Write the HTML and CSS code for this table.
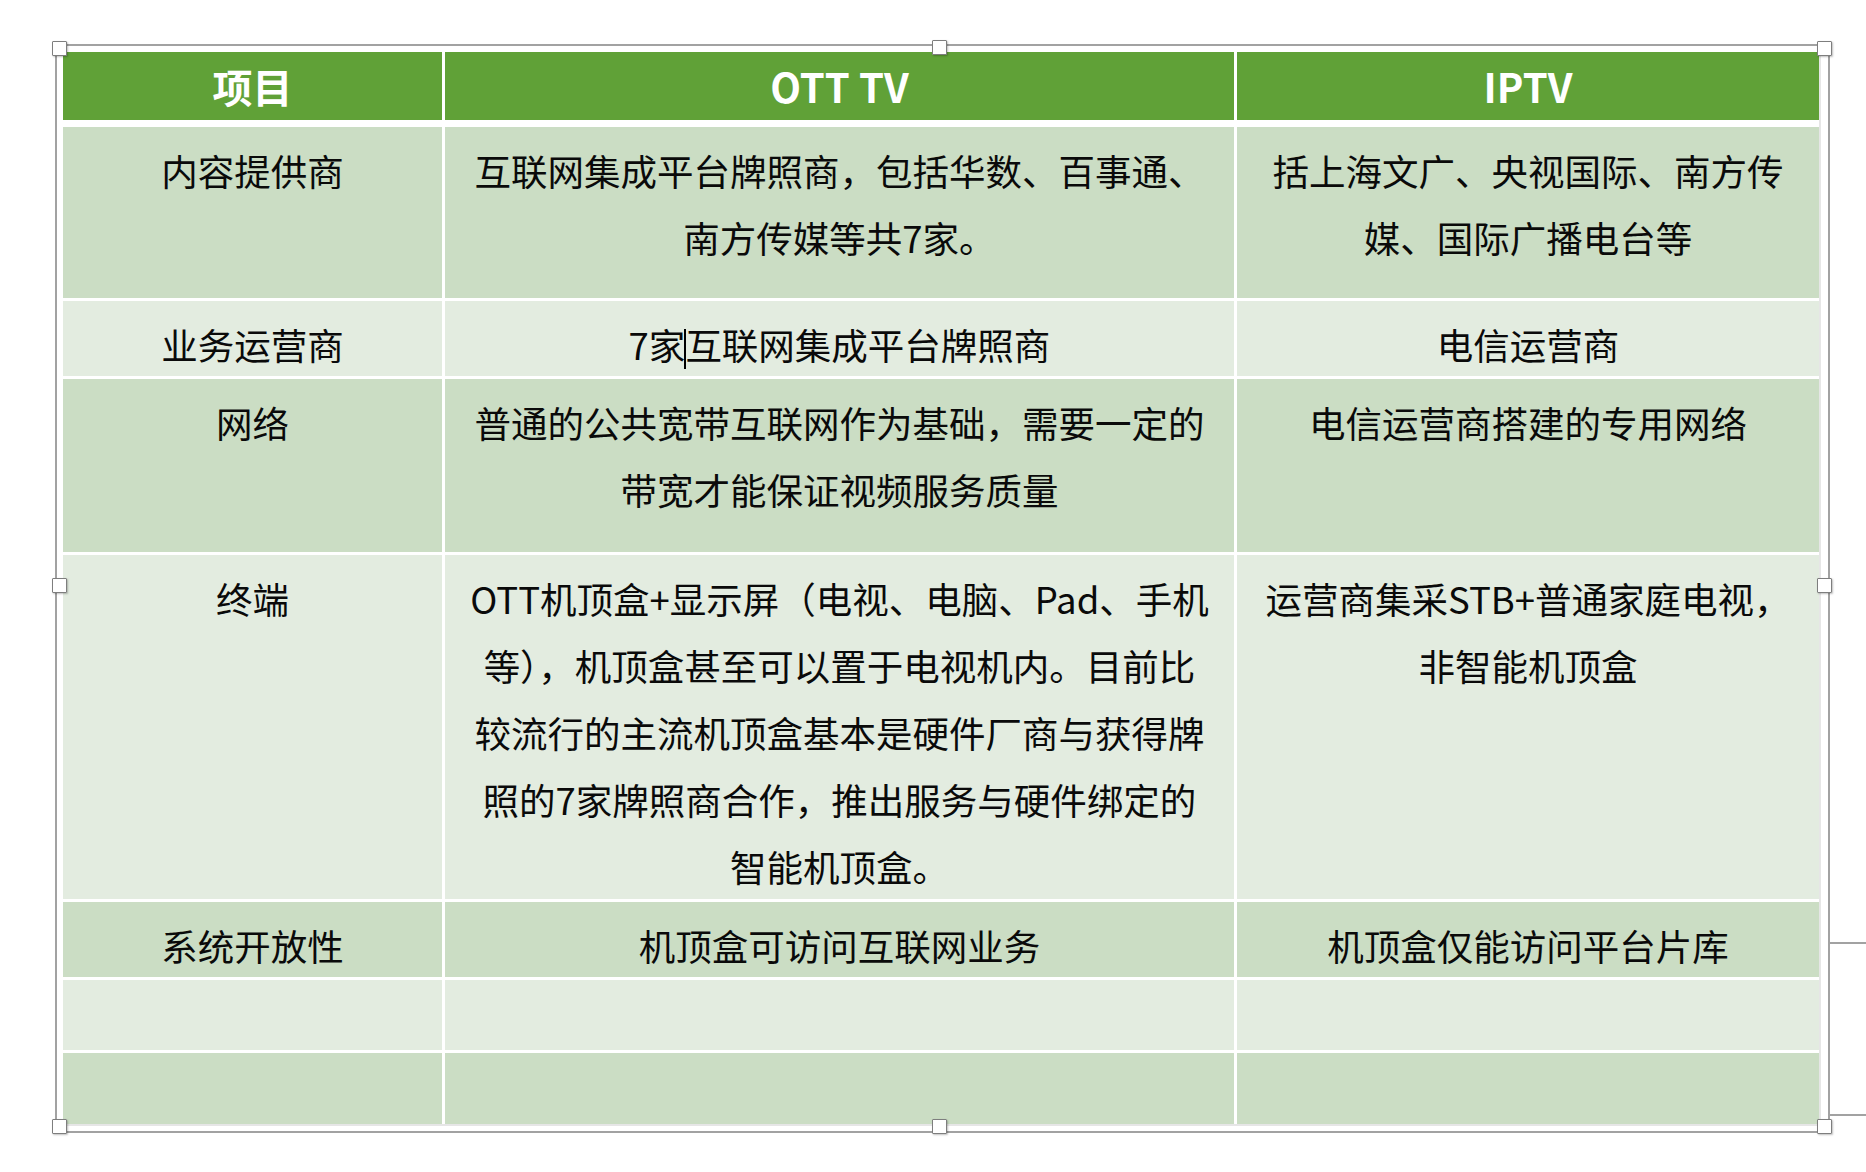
FILE: index.html
```html
<!DOCTYPE html>
<html lang="zh-CN">
<head>
<meta charset="utf-8">
<title>OTT TV 与 IPTV 对比</title>
<link rel="stylesheet" href="styles.css">
</head>
<body>
<div class="frame">
  <div class="grid">
    <div class="row head">
      <div class="cell">项目</div>
      <div class="cell">OTT TV</div>
      <div class="cell">IPTV</div>
    </div>
    <div class="row dark">
      <div class="cell">内容提供商</div>
      <div class="cell">互联网集成平台牌照商，包括华数、百事通、<br>南方传媒等共7家。</div>
      <div class="cell">括上海文广、央视国际、南方传<br>媒、国际广播电台等</div>
    </div>
    <div class="row light">
      <div class="cell">业务运营商</div>
      <div class="cell">7家<span class="caret"></span>互联网集成平台牌照商</div>
      <div class="cell">电信运营商</div>
    </div>
    <div class="row dark">
      <div class="cell">网络</div>
      <div class="cell">普通的公共宽带互联网作为基础，需要一定的<br>带宽才能保证视频服务质量</div>
      <div class="cell">电信运营商搭建的专用网络</div>
    </div>
    <div class="row light">
      <div class="cell">终端</div>
      <div class="cell">OTT机顶盒+显示屏（电视、电脑、Pad、手机<br>等），机顶盒甚至可以置于电视机内。目前比<br>较流行的主流机顶盒基本是硬件厂商与获得牌<br>照的7家牌照商合作，推出服务与硬件绑定的<br>智能机顶盒。</div>
      <div class="cell">运营商集采STB+普通家庭电视，<br>非智能机顶盒</div>
    </div>
    <div class="row dark">
      <div class="cell">系统开放性</div>
      <div class="cell">机顶盒可访问互联网业务</div>
      <div class="cell">机顶盒仅能访问平台片库</div>
    </div>
    <div class="row light">
      <div class="cell"></div>
      <div class="cell"></div>
      <div class="cell"></div>
    </div>
    <div class="row dark">
      <div class="cell"></div>
      <div class="cell"></div>
      <div class="cell"></div>
    </div>
  </div>
  <span class="handle h-tl"></span>
  <span class="handle h-tm"></span>
  <span class="handle h-tr"></span>
  <span class="handle h-ml"></span>
  <span class="handle h-mr"></span>
  <span class="handle h-bl"></span>
  <span class="handle h-bm"></span>
  <span class="handle h-br"></span>
  <span class="edge-line e1"></span>
  <span class="edge-line e2"></span>
</div>
</body>
</html>
```
FILE: styles.css
```css
html, body {
  margin: 0;
  padding: 0;
  background: #ffffff;
}

body {
  width: 1866px;
  height: 1172px;
  overflow: hidden;
  font-family: "Noto Sans CJK SC", "Noto Sans", sans-serif;
  color: #000;
}

.frame {
  position: relative;
  box-sizing: border-box;
  width: 1775px;
  margin: 44px 0 0 55px;
  border: 2px solid #a2a2a2;
  padding: 6px 9px 7px 6px;
}

.grid {
  display: grid;
  grid-template-columns: 379px 789px 582px;
  grid-template-rows: 72px 171px 75px 173px 344px 75px 70px 71px;
  column-gap: 3px;
  row-gap: 3px;
  box-shadow: 2px 2px 0 #e6e6e6;
}

.row {
  display: contents;
}

.cell {
  box-sizing: border-box;
  padding-top: 10px;
  font-size: 36.5px;
  line-height: 67px;
  text-align: center;
  white-space: nowrap;
  color: #0a0a0a;
}

.head .cell {
  margin-bottom: 4px;
  padding-top: 0;
  background: #60a137;
  color: #ffffff;
  font-weight: 700;
  font-size: 40px;
  display: flex;
  align-items: center;
  justify-content: center;
}

.dark .cell {
  background: #cbddc4;
}

.light .cell {
  background: #e3ece0;
}

.caret {
  display: inline-block;
  width: 2px;
  height: 40px;
  margin: 0 -1px;
  background: #000;
  vertical-align: -9px;
}

.handle {
  position: absolute;
  box-sizing: border-box;
  width: 15px;
  height: 15px;
  background: #ffffff;
  border: 1px solid #7e7e7e;
  border-radius: 1px;
  box-shadow: 1px 1px 2px rgba(0, 0, 0, 0.25);
}

.h-tl { left: -5px; top: -5px; }
.h-tm { left: 875px; top: -6px; }
.h-tr { right: -4px; top: -5px; }
.h-ml { left: -5px; top: 532px; }
.h-mr { right: -4px; top: 532px; }
.h-bl { left: -5px; bottom: -3px; }
.h-bm { left: 875px; bottom: -3px; }
.h-br { right: -4px; bottom: -3px; }

.edge-line {
  position: absolute;
  left: calc(100% + 2px);
  width: 40px;
  height: 2px;
  background: #a2a2a2;
}

.e1 { top: 896px; }
.e2 { top: 1068px; }
```
